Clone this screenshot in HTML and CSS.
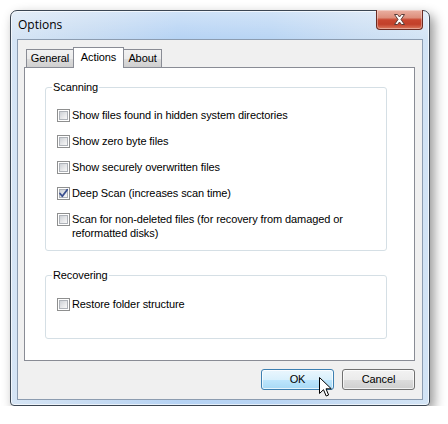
FILE: index.html
```html
<!DOCTYPE html>
<html>
<head>
<meta charset="utf-8">
<link rel="stylesheet" href="styles.css">
</head>
<body>
<div class="window">
  <div class="titlebar">
    <span class="title">Options</span>
    <div class="close">
      <svg width="13" height="11" viewBox="0 0 13 11"><path d="M1.5 0.5 H4.5 L6.5 3 L8.5 0.5 H11.5 L8 5.5 L11.5 10.5 H8.5 L6.5 8 L4.5 10.5 H1.5 L5 5.5 Z" fill="#fff" stroke="#5b3b36" stroke-width="1" stroke-linejoin="round"/></svg>
    </div>
  </div>
  <div class="client">
    <div class="tabs">
      <div class="tab">General</div>
      <div class="tab active">Actions</div>
      <div class="tab last">About</div>
    </div>
    <div class="panel">
      <div class="group scanning">
        <span class="legend">Scanning</span>
        <div class="row"><span class="cb"></span><span class="lbl">Show files found in hidden system directories</span></div>
        <div class="row"><span class="cb"></span><span class="lbl">Show zero byte files</span></div>
        <div class="row"><span class="cb"></span><span class="lbl">Show securely overwritten files</span></div>
        <div class="row"><span class="cb checked"><svg class="check" width="13" height="13" viewBox="0 0 13 13"><path d="M3 6.5 L5.3 9.3 L10.2 2.8" fill="none" stroke="#3a4f8f" stroke-width="1.8" stroke-linecap="round" stroke-linejoin="round"/></svg></span><span class="lbl">Deep Scan (increases scan time)</span></div>
        <div class="row"><span class="cb"></span><span class="lbl">Scan for non-deleted files (for recovery from damaged or reformatted disks)</span></div>
      </div>
      <div class="group recovering">
        <span class="legend">Recovering</span>
        <div class="row"><span class="cb"></span><span class="lbl">Restore folder structure</span></div>
      </div>
    </div>
    <div class="buttons">
      <div class="btn ok">OK
        <svg class="cursor" width="14" height="21" viewBox="0 0 14 21"><path d="M0.5 0.5 V16.5 L4.5 12.7 L7.2 19 L9.6 18 L7 11.8 H12.3 Z" fill="#fff" stroke="#000" stroke-width="1" stroke-linejoin="miter"/></svg>
      </div>
      <div class="btn">Cancel</div>
    </div>
  </div>
</div>
</body>
</html>
```
FILE: styles.css
```css
html, body {
  margin: 0;
  padding: 0;
  background: #ffffff;
}
body {
  padding: 10px 0 0 10px;
  font-family: "Liberation Sans", Arial, sans-serif;
  font-size: 11px;
  letter-spacing: -0.1px;
  color: #000;
}
.window {
  width: 420px;
  height: 396px;
  box-sizing: border-box;
  border: 1px solid #3b4653;
  border-radius: 7px 7px 4px 4px;
  padding: 0 6px 5px 6px;
  display: flex;
  flex-direction: column;
  background:
    linear-gradient(to bottom, rgba(255,255,255,0.35), rgba(255,255,255,0) 28px),
    linear-gradient(to right, #d6e5f5 0%, #c8dcf2 18%, #b6d3f4 40%, #b9d5f4 62%, #c9ddf3 82%, #d3e4f5 100%);
  box-shadow: inset 0 0 0 1px rgba(255,255,255,0.65), 4px 5px 12px rgba(0,0,0,0.42);
}
.titlebar {
  height: 28px;
  display: flex;
  align-items: flex-start;
  flex: none;
}
.title {
  font-family: "Open Sans", "Liberation Sans", sans-serif;
  font-size: 12px;
  letter-spacing: 0;
  line-height: 16px;
  padding: 6px 0 0 1px;
  color: #000;
}
.close {
  margin-left: auto;
  margin-top: -1px;
  width: 47px;
  height: 20px;
  box-sizing: border-box;
  border: 1px solid #6b2b22;
  border-top: none;
  border-radius: 0 0 4px 4px;
  background: linear-gradient(to bottom, #eab0a2 0%, #dd8f7c 40%, #c9462f 52%, #c2402a 75%, #dc7a5f 100%);
  box-shadow: inset 0 0 0 1px rgba(255,255,255,0.35);
  display: flex;
  align-items: center;
  justify-content: center;
}
.client {
  flex: 1;
  box-sizing: border-box;
  border: 1px solid #8c9cb0;
  background: #f0f0f0;
  padding: 7px 7px 9px 6px;
  display: flex;
  flex-direction: column;
}
.tabs {
  height: 20px;
  display: flex;
  align-items: flex-end;
  padding-left: 2px;
  flex: none;
}
.tab {
  height: 18px;
  box-sizing: border-box;
  border: 1px solid #898c95;
  border-bottom: none;
  background: linear-gradient(to bottom, #f2f2f2 0%, #ebebeb 50%, #dddddd 51%, #cfcfcf 100%);
  line-height: 17px;
  text-align: center;
}
.tab:first-child { width: 48px; }
.tab.active {
  width: 51px;
  height: 21px;
  margin-left: -1px;
  margin-bottom: -1px;
  background: #fff;
  position: relative;
  z-index: 1;
  line-height: 18px;
}
.tab.last { width: 39px; margin-left: -1px; }
.panel {
  height: 294px;
  box-sizing: border-box;
  border: 1px solid #898c95;
  background: #fff;
  padding: 19px 27px 0 20px;
  flex: none;
}
.group {
  position: relative;
  box-sizing: border-box;
  border: 1px solid #d5dfe5;
  border-radius: 3px;
  padding: 20px 10px 0 11px;
  display: flex;
  flex-direction: column;
  gap: 12px;
}
.scanning { height: 164px; }
.recovering { height: 64px; margin-top: 24px; padding-top: 21px; }
.legend {
  position: absolute;
  top: -8px;
  left: 6px;
  padding: 0 1px;
  background: #fff;
  line-height: 14px;
}
.row {
  display: flex;
  align-items: flex-start;
  gap: 2px;
  line-height: 14px;
}
.lbl { flex: 1; padding-right: 22px; }
.cb {
  position: relative;
  flex: none;
  width: 13px;
  height: 13px;
  margin-top: 1px;
  box-sizing: border-box;
  border: 1px solid #8e8f8f;
  background: #fff;
  padding: 1px;
}
.cb::before {
  content: "";
  display: block;
  width: 9px;
  height: 9px;
  box-sizing: border-box;
  border: 1px solid #aeb2b8;
  background: linear-gradient(135deg, #cdd1d6 0%, #e6e7e9 55%, #f8f8f8 100%);
}
.check {
  position: absolute;
  left: -1px;
  top: -1px;
}
.buttons {
  margin-top: 8px;
  display: flex;
  justify-content: flex-end;
  gap: 8px;
}
.btn {
  position: relative;
  width: 73px;
  height: 21px;
  box-sizing: border-box;
  border: 1px solid #707070;
  border-radius: 3px;
  background: linear-gradient(to bottom, #f2f2f2 0%, #ebebeb 50%, #dddddd 51%, #cfcfcf 100%);
  box-shadow: inset 0 0 0 1px rgba(255,255,255,0.7);
  text-align: center;
  line-height: 19px;
}
.btn.ok {
  border-color: #3c7fb1;
  background: linear-gradient(to bottom, #eaf6fd 0%, #d9f0fc 50%, #bee6fd 51%, #a7d9f5 100%);
}
.cursor {
  position: absolute;
  left: 57px;
  top: 7px;
}
```
